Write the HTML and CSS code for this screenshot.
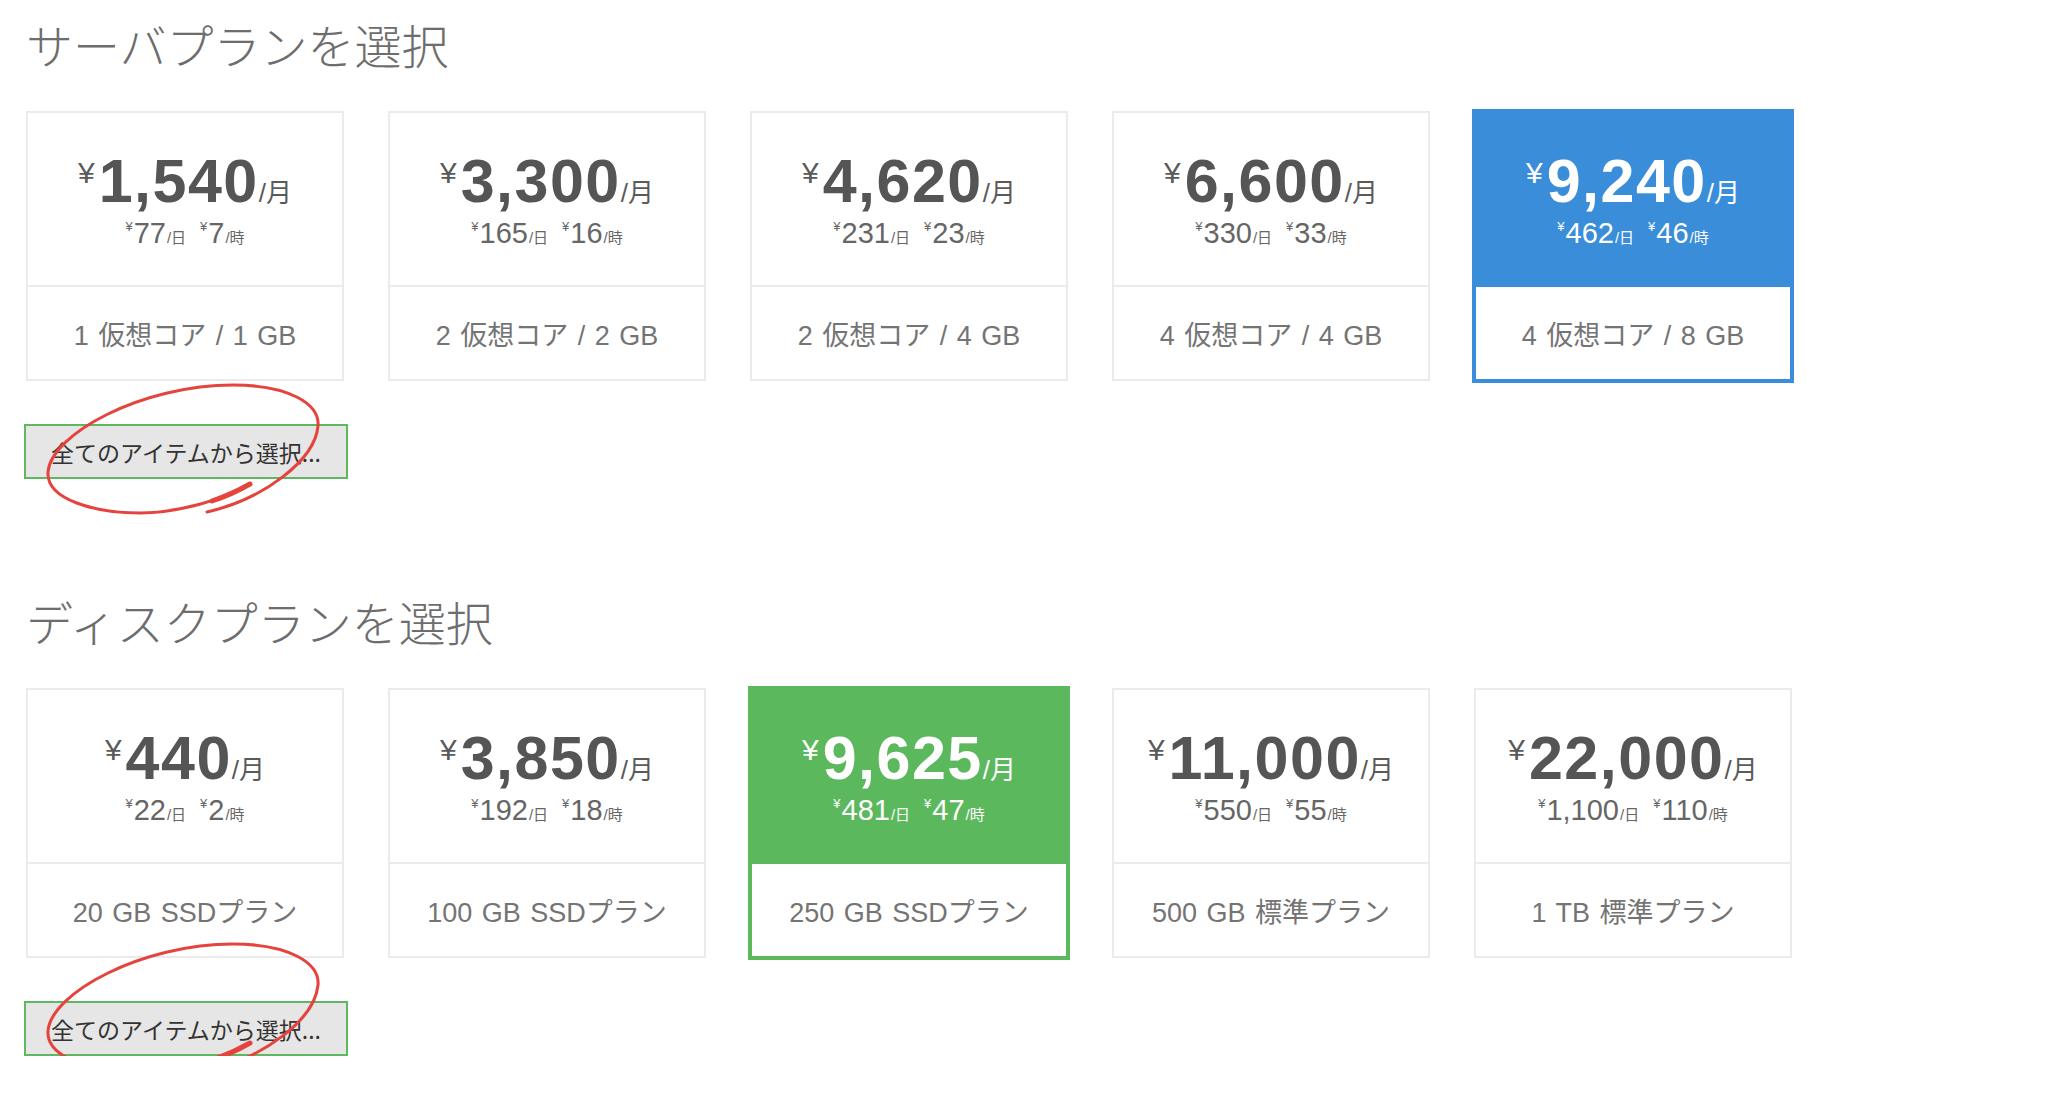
FILE: index.html
```html
<!DOCTYPE html>
<html lang="ja">
<head>
<meta charset="utf-8">
<title>プラン選択</title>
<link rel="stylesheet" href="styles.css">
</head>
<body>
<div class="page">
  <section class="plan-section first">
    <h2 class="section-title">サーバプランを選択</h2>
    <div class="plan-row">
      <div class="plan-card">
        <div class="plan-price">
          <div class="price-main"><span class="yen">¥</span><span class="amount">1,540</span><span class="unit">/月</span></div>
          <div class="price-sub"><span class="rate"><span class="yen-s">¥</span>77<span class="unit-s">/日</span></span><span class="rate"><span class="yen-s">¥</span>7<span class="unit-s">/時</span></span></div>
        </div>
        <div class="plan-spec">1 仮想コア / 1 GB</div>
      </div>
      <div class="plan-card">
        <div class="plan-price">
          <div class="price-main"><span class="yen">¥</span><span class="amount">3,300</span><span class="unit">/月</span></div>
          <div class="price-sub"><span class="rate"><span class="yen-s">¥</span>165<span class="unit-s">/日</span></span><span class="rate"><span class="yen-s">¥</span>16<span class="unit-s">/時</span></span></div>
        </div>
        <div class="plan-spec">2 仮想コア / 2 GB</div>
      </div>
      <div class="plan-card">
        <div class="plan-price">
          <div class="price-main"><span class="yen">¥</span><span class="amount">4,620</span><span class="unit">/月</span></div>
          <div class="price-sub"><span class="rate"><span class="yen-s">¥</span>231<span class="unit-s">/日</span></span><span class="rate"><span class="yen-s">¥</span>23<span class="unit-s">/時</span></span></div>
        </div>
        <div class="plan-spec">2 仮想コア / 4 GB</div>
      </div>
      <div class="plan-card">
        <div class="plan-price">
          <div class="price-main"><span class="yen">¥</span><span class="amount">6,600</span><span class="unit">/月</span></div>
          <div class="price-sub"><span class="rate"><span class="yen-s">¥</span>330<span class="unit-s">/日</span></span><span class="rate"><span class="yen-s">¥</span>33<span class="unit-s">/時</span></span></div>
        </div>
        <div class="plan-spec">4 仮想コア / 4 GB</div>
      </div>
      <div class="plan-card selected blue">
        <div class="plan-price">
          <div class="price-main"><span class="yen">¥</span><span class="amount">9,240</span><span class="unit">/月</span></div>
          <div class="price-sub"><span class="rate"><span class="yen-s">¥</span>462<span class="unit-s">/日</span></span><span class="rate"><span class="yen-s">¥</span>46<span class="unit-s">/時</span></span></div>
        </div>
        <div class="plan-spec">4 仮想コア / 8 GB</div>
      </div>
    </div>
    <div class="more-wrap">
      <button class="more-btn" type="button">全てのアイテムから選択...</button>
      <svg class="annot" width="340" height="180" viewBox="0 0 340 180" aria-hidden="true">
        <path class="annot-line" d="M226 120 C200 136, 152 149, 116 149 C72 149, 22 136, 24 108 C27 70, 118 21, 209 21 C265 21, 296 40, 294 62 C291 96, 240 135, 183 148"/>
        <path class="annot-tail" d="M226 120 C212 128, 200 133, 188 137"/>
      </svg>
    </div>
  </section>

  <section class="plan-section second">
    <h2 class="section-title">ディスクプランを選択</h2>
    <div class="plan-row">
      <div class="plan-card">
        <div class="plan-price">
          <div class="price-main"><span class="yen">¥</span><span class="amount">440</span><span class="unit">/月</span></div>
          <div class="price-sub"><span class="rate"><span class="yen-s">¥</span>22<span class="unit-s">/日</span></span><span class="rate"><span class="yen-s">¥</span>2<span class="unit-s">/時</span></span></div>
        </div>
        <div class="plan-spec">20 GB SSDプラン</div>
      </div>
      <div class="plan-card">
        <div class="plan-price">
          <div class="price-main"><span class="yen">¥</span><span class="amount">3,850</span><span class="unit">/月</span></div>
          <div class="price-sub"><span class="rate"><span class="yen-s">¥</span>192<span class="unit-s">/日</span></span><span class="rate"><span class="yen-s">¥</span>18<span class="unit-s">/時</span></span></div>
        </div>
        <div class="plan-spec">100 GB SSDプラン</div>
      </div>
      <div class="plan-card selected green">
        <div class="plan-price">
          <div class="price-main"><span class="yen">¥</span><span class="amount">9,625</span><span class="unit">/月</span></div>
          <div class="price-sub"><span class="rate"><span class="yen-s">¥</span>481<span class="unit-s">/日</span></span><span class="rate"><span class="yen-s">¥</span>47<span class="unit-s">/時</span></span></div>
        </div>
        <div class="plan-spec">250 GB SSDプラン</div>
      </div>
      <div class="plan-card">
        <div class="plan-price">
          <div class="price-main"><span class="yen">¥</span><span class="amount">11,000</span><span class="unit">/月</span></div>
          <div class="price-sub"><span class="rate"><span class="yen-s">¥</span>550<span class="unit-s">/日</span></span><span class="rate"><span class="yen-s">¥</span>55<span class="unit-s">/時</span></span></div>
        </div>
        <div class="plan-spec">500 GB 標準プラン</div>
      </div>
      <div class="plan-card">
        <div class="plan-price">
          <div class="price-main"><span class="yen">¥</span><span class="amount">22,000</span><span class="unit">/月</span></div>
          <div class="price-sub"><span class="rate"><span class="yen-s">¥</span>1,100<span class="unit-s">/日</span></span><span class="rate"><span class="yen-s">¥</span>110<span class="unit-s">/時</span></span></div>
        </div>
        <div class="plan-spec">1 TB 標準プラン</div>
      </div>
    </div>
    <div class="more-wrap">
      <button class="more-btn" type="button">全てのアイテムから選択...</button>
      <svg class="annot raised" width="340" height="180" viewBox="0 0 340 180" aria-hidden="true">
        <path class="annot-line" d="M226 120 C200 136, 152 149, 116 149 C72 149, 22 136, 24 108 C27 70, 118 21, 209 21 C265 21, 296 40, 294 62 C291 96, 240 135, 183 148"/>
        <path class="annot-tail" d="M226 120 C212 128, 200 133, 188 137"/>
      </svg>
    </div>
  </section>
</div>
</body>
</html>
```

FILE: styles.css
```css
html, body {
  margin: 0;
  padding: 0;
  background: #ffffff;
}

body {
  font-family: "Liberation Sans", "Noto Sans CJK JP", sans-serif;
  color: #666666;
}

.page {
  padding-left: 24px;
}

.plan-section.first {
  padding-top: 16px;
}

.plan-section.second {
  margin-top: 114px;
}

.section-title {
  margin: 0;
  padding-left: 2px;
  font-family: "Noto Sans CJK JP", sans-serif;
  font-size: 47px;
  line-height: 56px;
  font-weight: 300;
  color: #6d6d6d;
}

.plan-row {
  display: flex;
  align-items: flex-start;
  gap: 44px;
  margin-top: 39px;
  padding-left: 2px;
}

.plan-card {
  box-sizing: border-box;
  width: 318px;
  height: 270px;
  border: 2px solid #ebebeb;
  background: #ffffff;
  display: flex;
  flex-direction: column;
}

.plan-price {
  box-sizing: border-box;
  height: 172px;
  padding-top: 36px;
  text-align: center;
  white-space: nowrap;
}

.price-main {
  font-size: 61px;
  line-height: 64px;
  font-weight: 700;
  color: #555555;
}

.amount {
  letter-spacing: 1.5px;
}

.yen {
  font-size: 30px;
  line-height: 0;
  font-weight: 400;
  vertical-align: 19px;
  margin-right: 4px;
  color: #5a5a5a;
}

.unit {
  font-size: 26px;
  line-height: 0;
  font-weight: 400;
  color: #5a5a5a;
}

.price-sub {
  margin-top: 5px;
  font-size: 29px;
  line-height: 30px;
  font-weight: 400;
  color: #666666;
}

.rate + .rate {
  margin-left: 14px;
}

.yen-s {
  font-size: 13px;
  line-height: 0;
  vertical-align: 12px;
  margin-right: 1px;
}

.unit-s {
  font-size: 15px;
  line-height: 0;
  margin-left: 1px;
}

.plan-spec {
  flex: 1;
  border-top: 2px solid #ebebeb;
  display: flex;
  align-items: center;
  justify-content: center;
  font-size: 27px;
  word-spacing: 2px;
  color: #747474;
  white-space: nowrap;
}

.plan-card.selected {
  width: 322px;
  height: 274px;
  margin: -2px;
  border-width: 4px;
}

.plan-card.selected .price-main,
.plan-card.selected .yen,
.plan-card.selected .unit,
.plan-card.selected .price-sub {
  color: #ffffff;
}

.plan-card.blue {
  border-color: #3a8dd8;
}

.plan-card.blue .plan-price {
  background: #3a8dd8;
}

.plan-card.blue .plan-spec {
  border-top-color: #3a8dd8;
}

.plan-card.green {
  border-color: #5cb85c;
}

.plan-card.green .plan-price {
  background: #5cb85c;
}

.plan-card.green .plan-spec {
  border-top-color: #5cb85c;
}

.more-wrap {
  position: relative;
  width: 324px;
  margin-top: 43px;
}

.more-btn {
  display: block;
  box-sizing: border-box;
  width: 324px;
  height: 55px;
  margin: 0;
  padding: 0;
  border: 2px solid #5fb760;
  border-radius: 0;
  background: #e6e6e6;
  font-family: "Noto Sans CJK JP", sans-serif;
  font-size: 23px;
  color: #333333;
  text-align: center;
}

.annot {
  position: absolute;
  left: 0;
  top: -60px;
  overflow: visible;
  pointer-events: none;
}

.annot.raised {
  top: -78px;
}

.annot-line {
  fill: none;
  stroke: #e5433d;
  stroke-width: 3;
  stroke-linecap: round;
  stroke-linejoin: round;
}

.annot-tail {
  fill: none;
  stroke: #e5433d;
  stroke-width: 5;
  stroke-linecap: round;
}
```
